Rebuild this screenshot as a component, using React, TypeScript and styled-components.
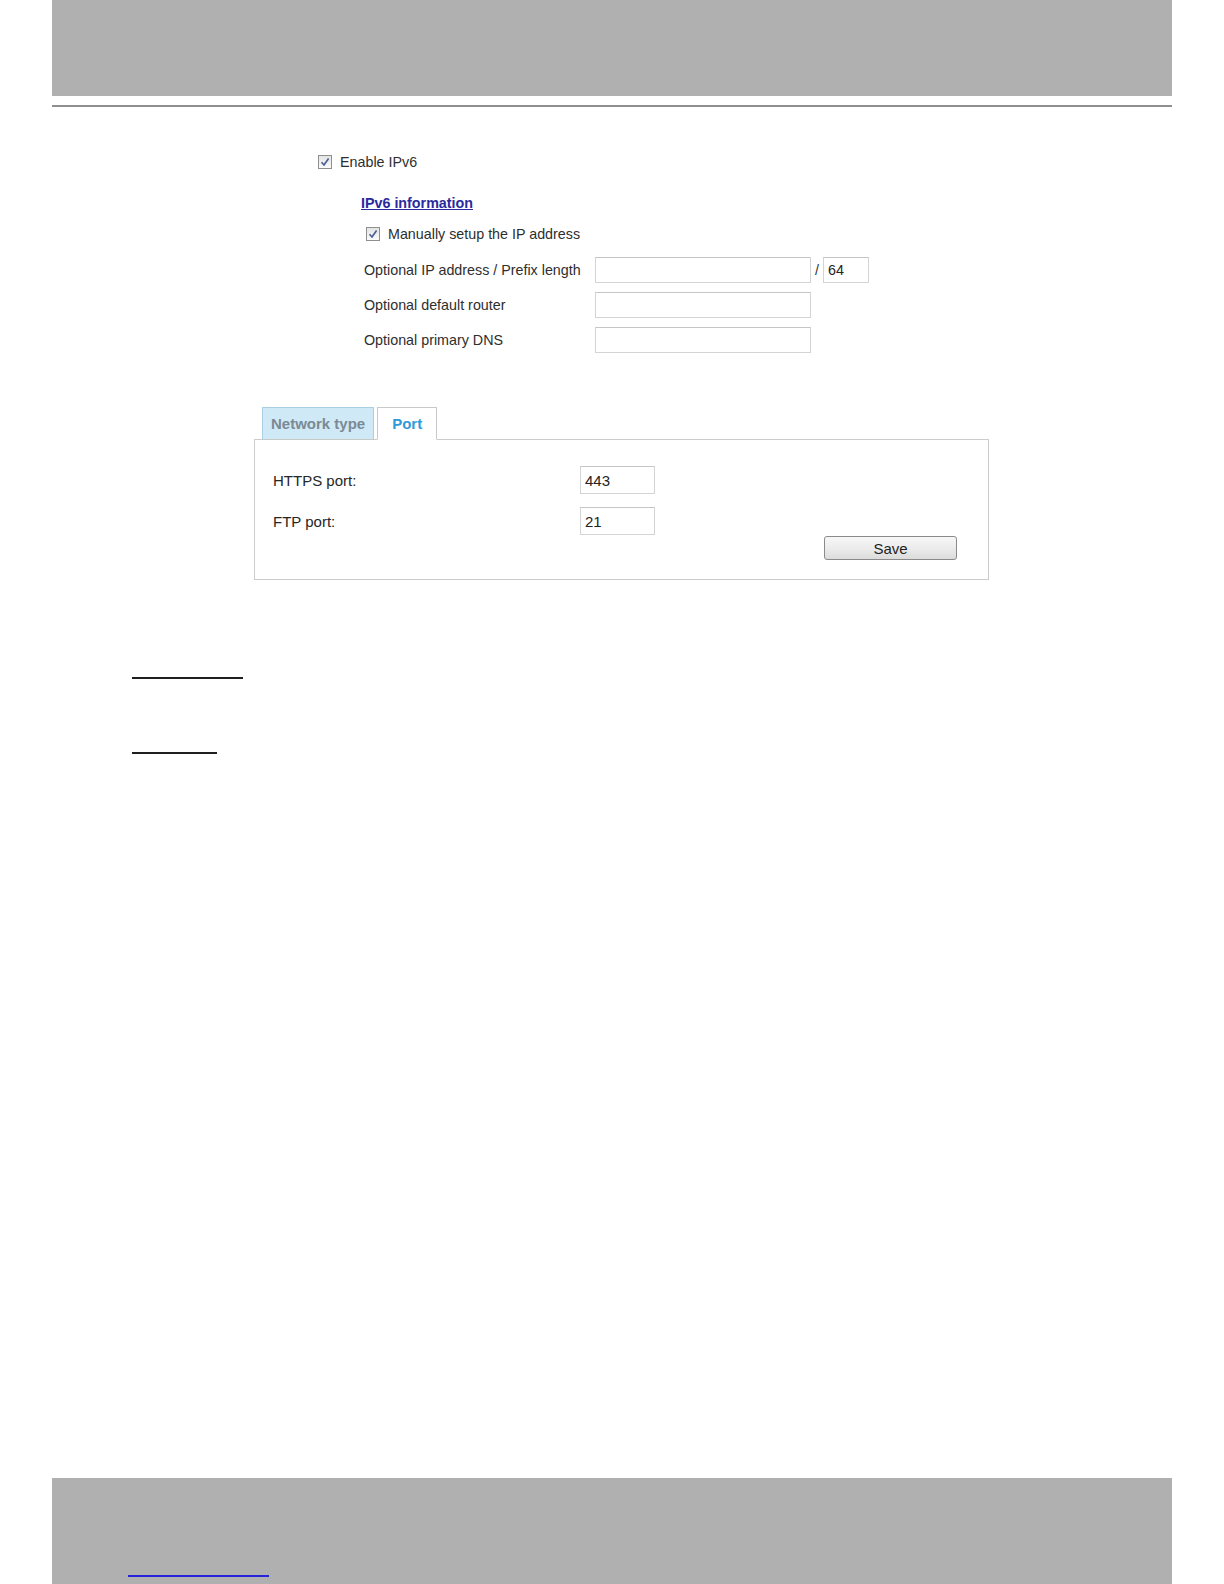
import React from "react";
import styled, { createGlobalStyle } from "styled-components";

const GlobalStyle = createGlobalStyle`
  html, body { margin: 0; padding: 0; background: #ffffff; }
  body { font-family: "Liberation Sans", Arial, sans-serif; color: #2a2a2a; }
  * { box-sizing: border-box; }
`;

const Page = styled.div`
  width: 1224px;
  height: 1584px;
  display: flex;
  flex-direction: column;
`;

const GrayBand = styled.div<{ $h: number }>`
  margin: 0 52px;
  height: ${(p) => p.$h}px;
  background: #b0b0b0;
  flex-shrink: 0;
`;

const Rule = styled.div`
  margin: 9px 52px 0 52px;
  height: 2px;
  background: #8f8f8f;
  flex-shrink: 0;
`;

const Content = styled.div`
  flex: 1;
  display: flex;
  flex-direction: column;
`;

const IPv6Section = styled.div`
  padding-left: 318px;
  margin-top: 47px;
  display: flex;
  flex-direction: column;
`;

const CheckRow = styled.label<{ $indent?: number; $mt?: number }>`
  display: flex;
  align-items: center;
  gap: 8px;
  height: 16px;
  line-height: 16px;
  font-size: 14.3px;
  color: #2e2e2e;
  margin-left: ${(p) => p.$indent ?? 0}px;
  margin-top: ${(p) => p.$mt ?? 0}px;
`;

const Box = styled.span`
  width: 14px;
  height: 14px;
  border: 1px solid #8e8f8f;
  background: linear-gradient(#e4e4e4, #fbfbfb);
  display: inline-flex;
  align-items: center;
  justify-content: center;
  flex-shrink: 0;
`;

const Check = () => (
  <Box>
    <svg width="10" height="10" viewBox="0 0 10 10">
      <path d="M1.5 5.2 L4 8 L8.6 1.6" fill="none" stroke="#4d5e99" strokeWidth="1.7" />
    </svg>
  </Box>
);

const SubBlock = styled.div`
  padding-left: 43px;
  display: flex;
  flex-direction: column;
`;

const InfoLink = styled.a`
  margin-top: 25px;
  height: 16px;
  line-height: 16px;
  font-size: 14.3px;
  font-weight: bold;
  color: #2a2a9e;
  text-decoration: underline;
  cursor: pointer;
  align-self: flex-start;
`;

const FieldGrid = styled.div`
  margin-top: 15px;
  display: grid;
  grid-template-columns: 234px auto;
  row-gap: 9px;
  align-items: center;
`;

const FieldLabel = styled.span`
  padding-left: 3px;
  font-size: 14.3px;
  color: #2e2e2e;
`;

const InputGroup = styled.div`
  display: flex;
  align-items: center;
  gap: 4px;
`;

const TextInput = styled.input<{ $w: number; $h?: number; $fs?: number }>`
  width: ${(p) => p.$w}px;
  height: ${(p) => p.$h ?? 26}px;
  border: 1px solid #d4d4d4;
  border-top-color: #c6c6c6;
  background: #fff;
  padding: 0 4px;
  font-family: "Liberation Sans", Arial, sans-serif;
  font-size: ${(p) => p.$fs ?? 14.3}px;
  color: #222;
  outline: none;
`;

const Slash = styled.span`
  font-size: 14.3px;
  color: #333;
`;

const TabSection = styled.div`
  margin-top: 54px;
  padding-left: 254px;
  display: flex;
  flex-direction: column;
`;

const TabBar = styled.div`
  display: flex;
  gap: 3px;
  padding-left: 8px;
  margin-bottom: -1px;
  position: relative;
  z-index: 1;
`;

const Tab = styled.div<{ $active?: boolean }>`
  height: 33px;
  padding: 0 ${(p) => (p.$active ? 14 : 8)}px;
  display: flex;
  align-items: center;
  font-size: 15px;
  font-weight: bold;
  border: 1px solid ${(p) => (p.$active ? "#c9c9c9" : "#a9cfe4")};
  border-bottom-color: ${(p) => (p.$active ? "#ffffff" : "#c9c9c9")};
  background: ${(p) => (p.$active ? "#ffffff" : "#cfe9f7")};
  color: ${(p) => (p.$active ? "#2f9ad7" : "#7b8a94")};
`;

const Panel = styled.div`
  width: 735px;
  height: 141px;
  border: 1px solid #cccccc;
  padding: 26px 31px 0 18px;
  display: flex;
  flex-direction: column;
`;

const PortGrid = styled.div`
  display: grid;
  grid-template-columns: 307px 75px;
  row-gap: 13px;
  align-items: center;
`;

const PortLabel = styled.span`
  font-size: 15px;
  color: #262626;
`;

const SaveRow = styled.div`
  display: flex;
  justify-content: flex-end;
  margin-top: 1px;
`;

const SaveButton = styled.button`
  width: 133px;
  height: 24px;
  border: 1px solid #8a8a8a;
  border-radius: 3px;
  background: linear-gradient(#f7f7f7 0%, #ececec 50%, #dcdcdc 100%);
  font-family: "Liberation Sans", Arial, sans-serif;
  font-size: 15px;
  color: #1e1e1e;
  padding: 0;
`;

const Notes = styled.div`
  padding-left: 132px;
  display: flex;
  flex-direction: column;
  align-items: flex-start;
`;

const NoteLine = styled.span<{ $w: number; $mt: number }>`
  width: ${(p) => p.$w}px;
  height: 2px;
  margin-top: ${(p) => p.$mt}px;
  background: #1f1f1f;
`;

const Footer = styled.div`
  margin: 0 52px;
  height: 106px;
  background: #b0b0b0;
  padding: 97px 0 0 76px;
  flex-shrink: 0;
`;

const FooterLink = styled.a`
  display: block;
  width: 141px;
  height: 2px;
  background: #2424d8;
`;

export default function App() {
  return (
    <Page>
      <GlobalStyle />
      <GrayBand $h={96} />
      <Rule />
      <Content>
        <IPv6Section>
          <CheckRow>
            <Check />
            Enable IPv6
          </CheckRow>
          <SubBlock>
            <InfoLink>IPv6 information</InfoLink>
            <CheckRow $indent={5} $mt={15}>
              <Check />
              Manually setup the IP address
            </CheckRow>
            <FieldGrid>
              <FieldLabel>Optional IP address / Prefix length</FieldLabel>
              <InputGroup>
                <TextInput $w={216} defaultValue="" />
                <Slash>/</Slash>
                <TextInput $w={46} defaultValue="64" />
              </InputGroup>
              <FieldLabel>Optional default router</FieldLabel>
              <InputGroup>
                <TextInput $w={216} defaultValue="" />
              </InputGroup>
              <FieldLabel>Optional primary DNS</FieldLabel>
              <InputGroup>
                <TextInput $w={216} defaultValue="" />
              </InputGroup>
            </FieldGrid>
          </SubBlock>
        </IPv6Section>

        <TabSection>
          <TabBar>
            <Tab>Network type</Tab>
            <Tab $active>Port</Tab>
          </TabBar>
          <Panel>
            <PortGrid>
              <PortLabel>HTTPS port:</PortLabel>
              <TextInput $w={75} $h={28} $fs={15} defaultValue="443" />
              <PortLabel>FTP port:</PortLabel>
              <TextInput $w={75} $h={28} $fs={15} defaultValue="21" />
            </PortGrid>
            <SaveRow>
              <SaveButton>Save</SaveButton>
            </SaveRow>
          </Panel>
        </TabSection>

        <Notes>
          <NoteLine $w={111} $mt={97} />
          <NoteLine $w={85} $mt={73} />
        </Notes>
      </Content>
      <Footer>
        <FooterLink />
      </Footer>
    </Page>
  );
}
